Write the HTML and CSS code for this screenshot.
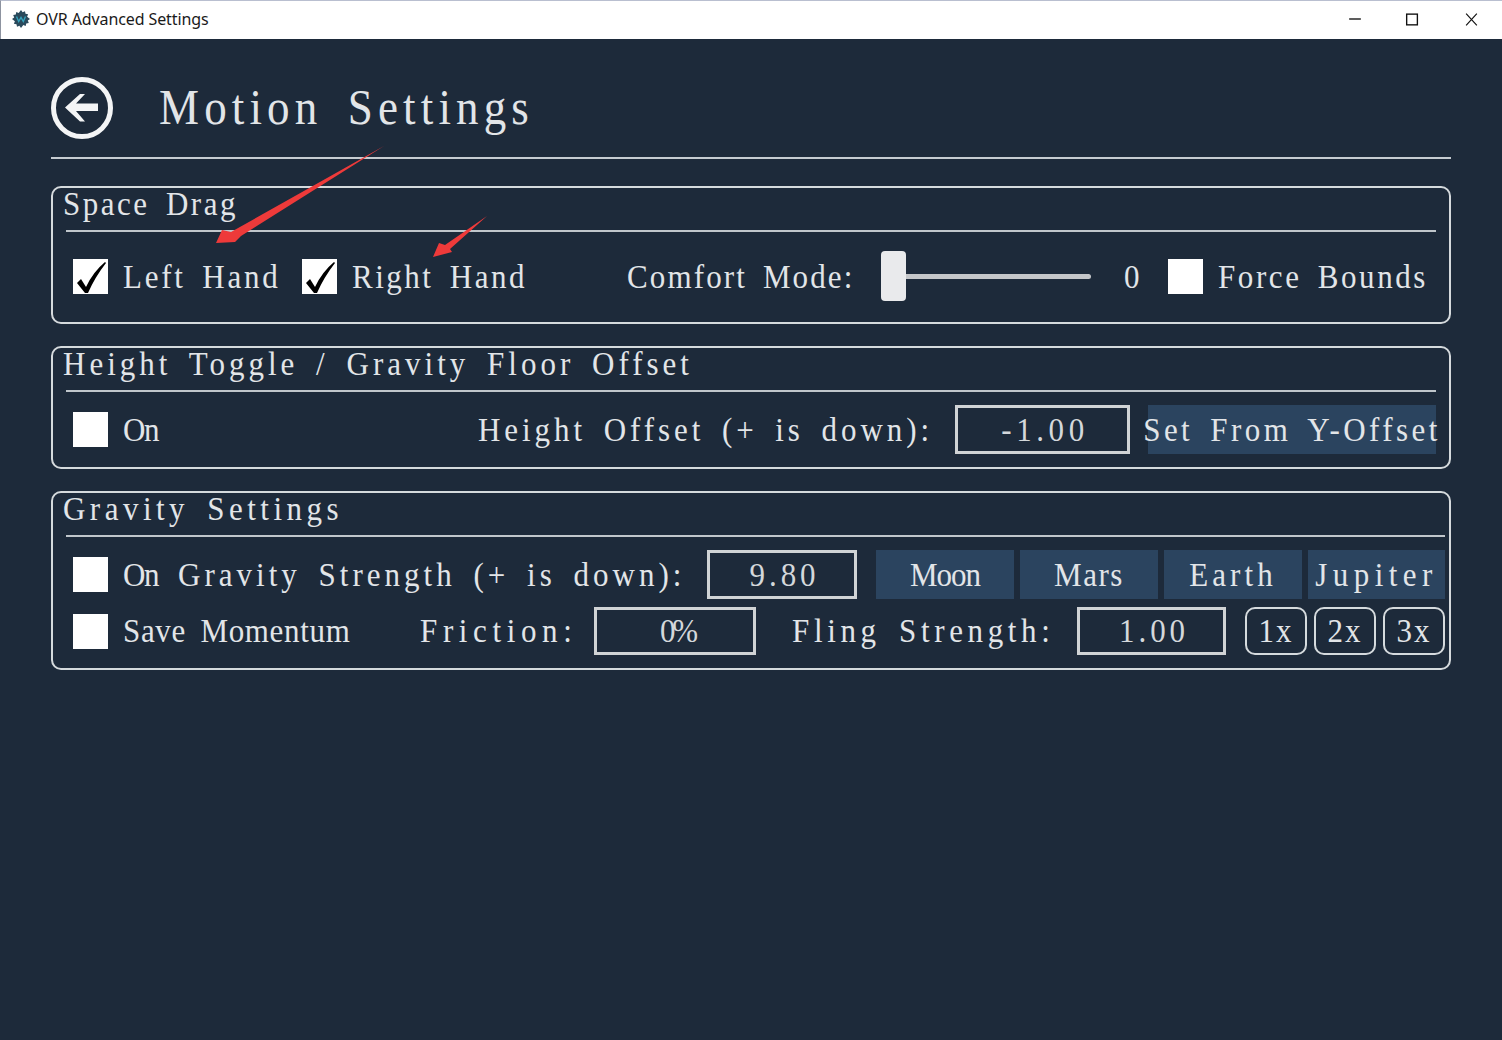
FILE: index.html
```html
<!DOCTYPE html>
<html lang="en">
<head>
<meta charset="utf-8">
<title>OVR Advanced Settings</title>
<link rel="stylesheet" href="styles.css">
</head>
<body>
<div class="window">
  <header class="titlebar">
    <svg class="app-icon" viewBox="0 0 18 18" aria-hidden="true">
      <path fill="#2a4a5c" d="M9 0l1.600 2.200 2.400-1 .5 2.600 2.600.5-1 2.400L18 9l-2.200 1.600 1 2.400-2.600.5-.5 2.600-2.400-1L9 18l-1.600-2.200-2.400 1-.5-2.600-2.600-.5 1-2.400L0 9l2.200-1.600-1-2.400 2.600-.5.5-2.600 2.400 1z"/>
      <path fill="none" stroke="#35a3bd" stroke-width="1.400" d="M4.500 6.500l2.200 5 2.300-4 2.300 4 2.200-5"/>
    </svg>
    <span class="app-name">OVR Advanced Settings</span>
    <div class="win-controls">
      <svg class="win-btn" viewBox="0 0 58 39" aria-hidden="true"><path stroke="#111" stroke-width="1.400" d="M23 19.500h12"/></svg>
      <svg class="win-btn" viewBox="0 0 58 39" aria-hidden="true"><rect x="22.500" y="14.500" width="11" height="11" fill="none" stroke="#111" stroke-width="1.400"/></svg>
      <svg class="win-btn" viewBox="0 0 58 39" aria-hidden="true"><path stroke="#111" stroke-width="1.200" d="M24 14l11 12M35 14l-11 12"/></svg>
    </div>
  </header>

  <main class="page">
    <div class="page-head">
      <svg class="back" viewBox="0 0 62 62" aria-hidden="true">
        <circle cx="31" cy="31" r="28.500" fill="none" stroke="#f4f5f6" stroke-width="5"/>
        <path fill="#f4f5f6" d="M14 30.500 29 17h5L25 26.500H47V34H25L34 44.500h-5z"/>
      </svg>
      <h1 class="page-title"><span class="fit" data-cell="25">Motion Settings</span></h1>
    </div>
    <div class="head-rule"></div>

    <section class="group">
      <h2 class="group-title"><span class="fit">Space Drag</span></h2>
      <div class="rule"></div>
      <div class="row row-a">
        <span class="check on"><svg viewBox="0 0 35 35" aria-hidden="true"><path d="M4 24l4-4 5 8Q20 13 32 3l1 1Q22 18 15 34h-3z"/></svg></span>
        <span class="label fit">Left Hand</span>
        <span class="check on gap-r"><svg viewBox="0 0 35 35" aria-hidden="true"><path d="M4 24l4-4 5 8Q20 13 32 3l1 1Q22 18 15 34h-3z"/></svg></span>
        <span class="label fit">Right Hand</span>
        <span class="label fit gap-comfort">Comfort Mode:</span>
        <div class="slider"><span class="thumb"></span><span class="track"></span></div>
        <span class="label fit gap-zero">0</span>
        <span class="check gap-force"></span>
        <span class="label fit">Force Bounds</span>
      </div>
    </section>

    <section class="group">
      <h2 class="group-title"><span class="fit">Height Toggle / Gravity Floor Offset</span></h2>
      <div class="rule"></div>
      <div class="row row-b">
        <span class="check"></span>
        <span class="label fit">On</span>
        <span class="label fit gap-height">Height Offset (+ is down):</span>
        <div class="field f-height"><span class="fit">-1.00</span></div>
        <div class="btn b-offset"><span class="fit">Set From Y-Offset</span></div>
      </div>
    </section>

    <section class="group">
      <h2 class="group-title"><span class="fit">Gravity Settings</span></h2>
      <div class="rule rule-wide"></div>
      <div class="row row-b">
        <span class="check"></span>
        <span class="label fit">On</span>
        <span class="label fit gap-strength">Gravity Strength (+ is down):</span>
        <div class="field f-gravity"><span class="fit">9.80</span></div>
        <div class="presets">
          <div class="btn"><span class="fit">Moon</span></div>
          <div class="btn"><span class="fit">Mars</span></div>
          <div class="btn"><span class="fit">Earth</span></div>
          <div class="btn"><span class="fit">Jupiter</span></div>
        </div>
      </div>
      <div class="row row-c">
        <span class="check"></span>
        <span class="label fit">Save Momentum</span>
        <span class="label fit gap-friction">Friction:</span>
        <div class="field f-friction"><span class="fit">0%</span></div>
        <span class="label fit gap-fling">Fling Strength:</span>
        <div class="field f-fling"><span class="fit">1.00</span></div>
        <div class="multis">
          <div class="multi"><span class="fit">1x</span></div>
          <div class="multi"><span class="fit">2x</span></div>
          <div class="multi"><span class="fit">3x</span></div>
        </div>
      </div>
    </section>
  </main>

  <svg class="annotations" viewBox="0 0 1502 1040" aria-hidden="true">
    <path fill="#ee3a3a" d="M216 243l6-13 9 2L384 146 241 236l-6 6z"/>
    <path fill="#ee3a3a" d="M433 257l6-14 6 2 42-29-37 33 2 3z"/>
  </svg>
</div>
<script src="fit.js"></script>
</body>
</html>
```
FILE: styles.css
```css
* { box-sizing: border-box; }
html, body { margin: 0; padding: 0; height: 1040px; overflow: hidden; }
body { background: #1d2a3a; }
.window {
  position: relative;
  width: 1502px;
  height: 1040px;
  background: #1d2a3a;
  color: #e2e5e8;
  font-family: "Liberation Serif", serif;
  overflow: hidden;
}
.fit {
  display: inline-block;
  transform: scaleY(1.12);
  white-space: pre;
  flex: none;
}
.titlebar {
  height: 39px;
  background: #fff;
  border-top: 1px solid #b9bfd0;
  border-left: 1px solid #8d93a0;
  display: flex;
  align-items: center;
  padding: 0 2px 2px 11px;
  font-family: "Noto Sans", "Open Sans", sans-serif;
  font-size: 16px;
  letter-spacing: -0.1px;
  color: #1a1a1a;
}
.app-icon { width: 18px; height: 18px; flex: none; }
.app-name { margin-left: 6px; }
.win-controls { margin-left: auto; display: flex; }
.win-btn { width: 58px; height: 38px; display: block; }

.page { padding: 0 51px; }
.page-head { display: flex; align-items: center; padding: 38px 0 18px; }
.back { width: 62px; height: 62px; flex: none; }
.page-title {
  margin: 0 0 0 46px;
  font-size: 45px;
  line-height: 60px;
  height: 62px;
  font-weight: 400;
  word-spacing: 9px;
}
.head-rule { height: 2px; background: #c6ccd1; margin-bottom: 27px; }

.group {
  border: 2px solid #d5dadd;
  border-radius: 10px;
  margin-bottom: 22px;
}
.group-title {
  margin: 0 0 0 10px;
  height: 42px;
  font-size: 31px;
  line-height: 31px;
  font-weight: 400;
  word-spacing: 6px;
}
.rule { height: 2px; background: #c0c6cb; margin: 0 13px; }
.rule-wide { margin-right: 4px; }

.row { display: flex; align-items: center; padding-left: 20px; }
.row-a { height: 50px; margin: 19px 0 21px; }
.row-a .check { margin-top: 1px; }
.row-a .label { margin-top: 2px; }
.row-b { height: 49px; margin: 13px 0; }
.row-c { height: 48px; margin: -5px 0 13px; }

.label {
  font-size: 31px;
  line-height: 38px;
  word-spacing: 6px;
}
.check {
  width: 35px;
  height: 35px;
  margin-right: 15px;
  background: #fff;
  flex: none;
}
.check svg { display: block; width: 35px; height: 35px; }
.gap-r { margin-left: 21.500px; }
.gap-comfort { margin-left: 100px; }
.gap-zero { margin-left: 33px; }
.gap-force { margin-left: 26.500px; }
.gap-height { margin-left: 320px; }
.gap-strength { margin-left: 20px; }
.gap-friction { margin-left: 69.500px; }
.gap-fling { margin-left: 36px; }

.slider { display: flex; align-items: center; margin-left: 26.500px; flex: none; }
.thumb { width: 25px; height: 50px; background: #e9eaec; border-radius: 4px; flex: none; }
.track { width: 185px; height: 5px; background: #c4c6c9; border-radius: 0 3px 3px 0; }

.field {
  height: 49px;
  border: 3px solid #d0d3d5;
  padding: 0 0 0 5px;
  display: flex;
  align-items: center;
  justify-content: center;
  font-size: 31px;
  color: #d4d8db;
  flex: none;
}
.f-height { width: 175px; margin-left: 22px; }
.f-gravity { width: 150px; margin-left: 21.500px; }
.f-friction { width: 162px; margin-left: 16.500px; height: 48px; }
.f-fling { width: 149px; margin-left: 22.500px; height: 48px; }

.btn {
  height: 49px;
  background: #2b445f;
  display: flex;
  align-items: center;
  justify-content: center;
  font-size: 31px;
  word-spacing: 6px;
  flex: none;
}
.b-offset { width: 288px; margin-left: 18px; }
.presets { display: grid; grid-template-columns: repeat(3, 138px) 137px; column-gap: 6px; margin-left: 19px; }
.multis { display: flex; gap: 7px; margin-left: 19px; }
.multi {
  width: 62px;
  height: 48px;
  border: 2px solid #d5dadd;
  border-radius: 10px;
  display: flex;
  align-items: center;
  justify-content: center;
  font-size: 31px;
}
.annotations {
  position: absolute;
  left: 0;
  top: 0;
  width: 1502px;
  height: 1040px;
  pointer-events: none;
}
```
FILE: fit.js
```js
// The reference text sits on a fixed character cell; spread each string to fill its cells.
document.querySelectorAll(".fit").forEach(function (el) {
  var cell = Number(el.dataset.cell) || 17.5;
  var n = el.textContent.length;
  var probe = document.createElement("span");
  probe.textContent = el.textContent;
  probe.style.whiteSpace = "pre";
  probe.style.position = "absolute";
  probe.style.visibility = "hidden";
  el.parentNode.appendChild(probe);
  var cs = getComputedStyle(el);
  probe.style.font = cs.font;
  probe.style.wordSpacing = cs.wordSpacing;
  var w = probe.getBoundingClientRect().width;
  probe.remove();
  el.style.letterSpacing = (n * cell - w) / n + "px";
});
```
